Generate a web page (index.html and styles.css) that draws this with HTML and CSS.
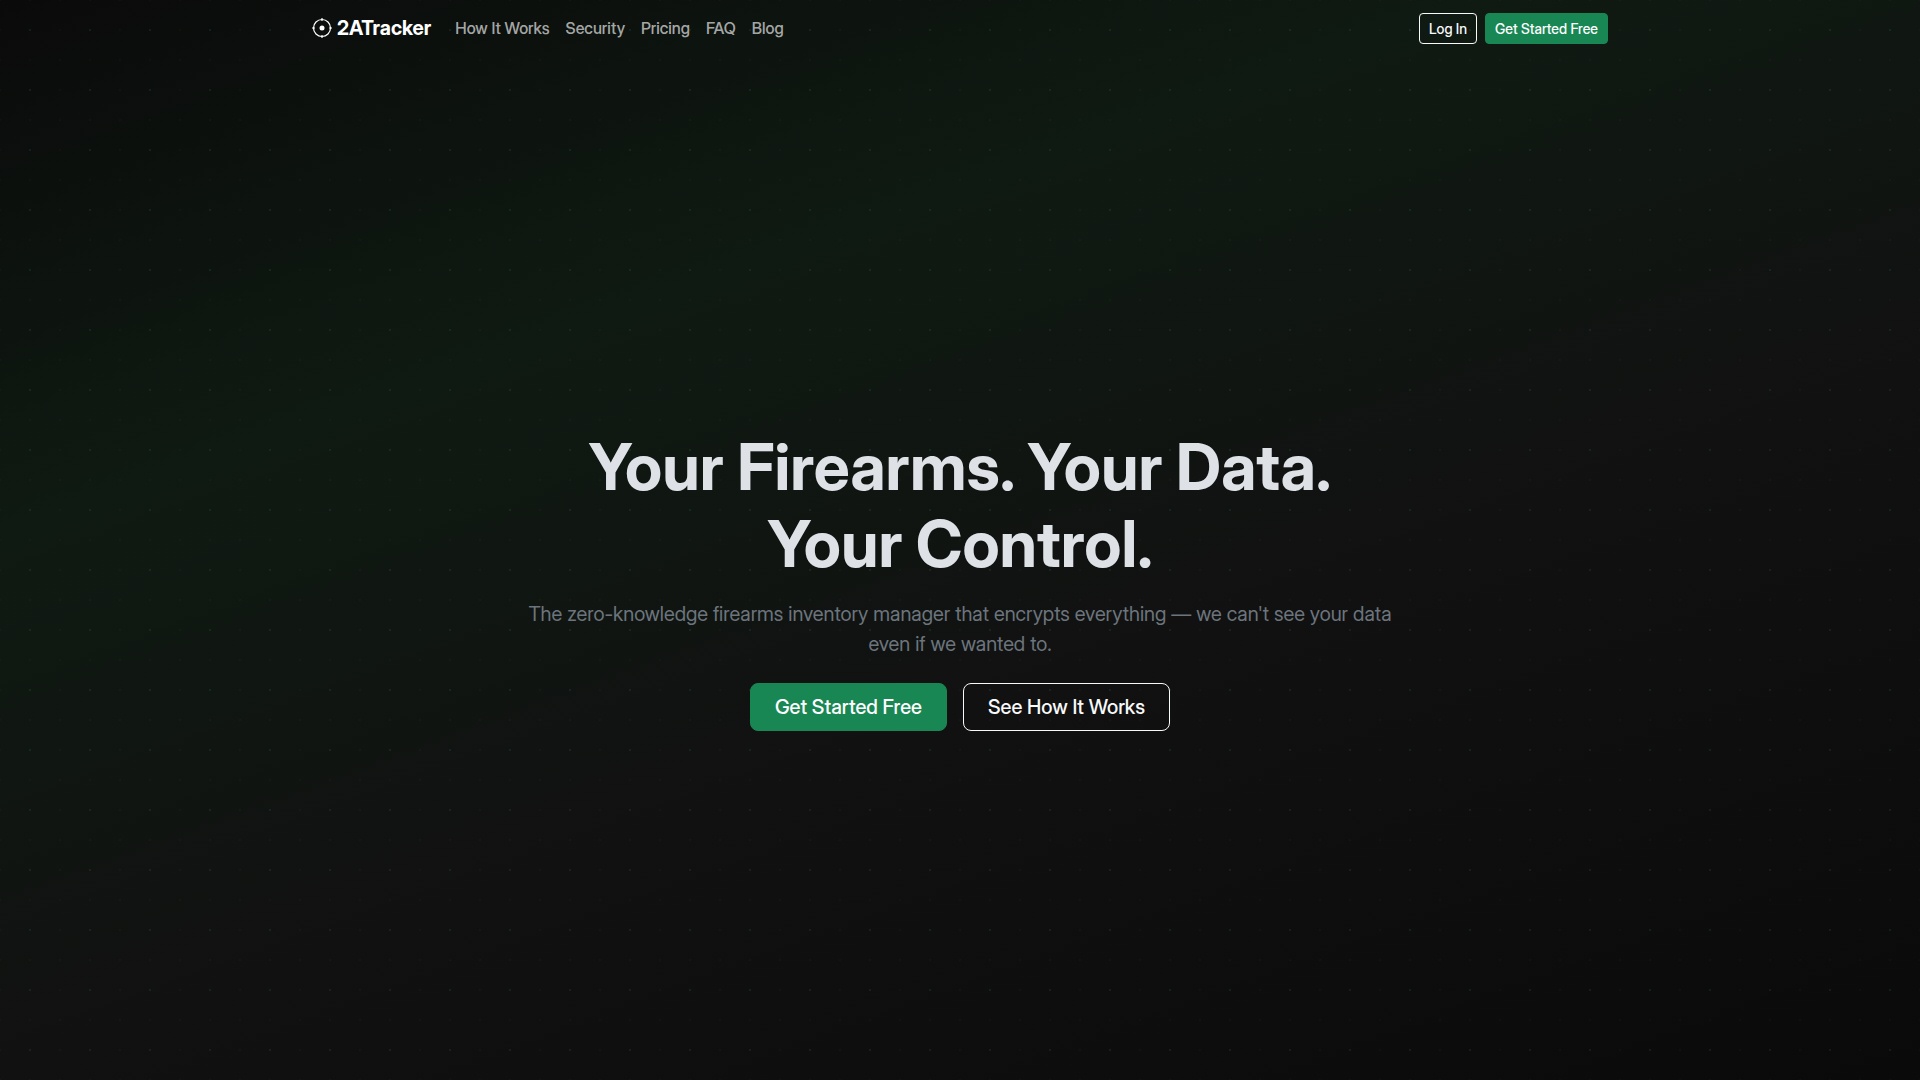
FILE: index.html
```html
<!DOCTYPE html>
<html lang="en">
<head>
  <meta charset="UTF-8">
  <meta name="viewport" content="width=device-width, initial-scale=1.0">
  <title>2ATracker</title>
  <link rel="stylesheet" href="styles.css">
</head>
<body>
  <header class="navbar">
    <div class="container">
      <a class="brand" href="#">
        <svg class="brand-icon" viewBox="0 0 20 20" fill="none" stroke="currentColor" aria-hidden="true">
          <circle cx="10" cy="10" r="8.5" stroke-width="1.2"/>
          <circle cx="10" cy="10" r="2.5" fill="currentColor" stroke="none"/>
          <path d="M10 0v3M10 17v3M0 10h3M17 10h3" stroke-width="1.2"/>
        </svg>
        2ATracker
      </a>
      <nav class="nav-links">
        <a href="#how-it-works">How It Works</a>
        <a href="#security">Security</a>
        <a href="#pricing">Pricing</a>
        <a href="#faq">FAQ</a>
        <a href="#blog">Blog</a>
      </nav>
      <div class="nav-actions">
        <a class="btn btn-sm btn-outline" href="#login">Log In</a>
        <a class="btn btn-sm btn-success" href="#signup">Get Started Free</a>
      </div>
    </div>
  </header>

  <main class="hero">
    <div class="hero-content">
      <h1>Your Firearms. Your Data.<br>Your Control.</h1>
      <p class="lead">The zero-knowledge firearms inventory manager that encrypts everything — we can't see your data even if we wanted to.</p>
      <div class="hero-actions">
        <a class="btn btn-lg btn-success" href="#signup">Get Started Free</a>
        <a class="btn btn-lg btn-outline" href="#how-it-works">See How It Works</a>
      </div>
    </div>
  </main>
</body>
</html>
```

FILE: styles.css
```css
:root {
  --success: #198754;
  --light: #f8f9fa;
  --heading: #dee2e6;
  --muted: #6c757d;
}

* {
  margin: 0;
  padding: 0;
  box-sizing: border-box;
}

body {
  display: flex;
  flex-direction: column;
  min-height: 100vh;
  font-family: "Inter Display", Inter, "Liberation Sans", sans-serif;
  font-size: 16px;
  line-height: 1.5;
  color: var(--heading);
  /* two dot grids over the diagonal gradient */
  background:
    radial-gradient(circle at 50% 50%, rgba(25, 135, 84, 0.12) 1px, transparent 1px) 0 0 / 60px 60px,
    radial-gradient(circle at 50% 50%, rgba(255, 255, 255, 0.02) 1px, transparent 1px) 15px 15px / 30px 30px,
    linear-gradient(160deg, #0a0a0a 0%, #0f1a12 30%, #111 60%, #0a0a0a 100%);
}

a {
  color: inherit;
  text-decoration: none;
}

.navbar {
  padding: 8px 0;
}

.container {
  display: flex;
  align-items: center;
  max-width: 1320px;
  min-height: 40px;
  margin: 0 auto;
  padding: 0 12px;
}

.brand {
  display: flex;
  align-items: center;
  gap: 5px;
  margin-right: 16px;
  font-size: 20px;
  font-weight: 700;
  color: #fff;
}

.brand-icon {
  width: 20px;
  height: 20px;
}

.nav-links {
  display: flex;
  font-weight: 500;
  color: rgba(255, 255, 255, 0.65);
}

.nav-links a {
  padding: 8px;
}

.nav-links a:hover {
  color: #fff;
}

.nav-actions {
  display: flex;
  gap: 8px;
  margin-left: auto;
}

.btn {
  border: 1px solid transparent;
  font-weight: 500;
  text-align: center;
}

.btn-sm {
  padding: 4px 9px;
  border-radius: 4px;
  font-size: 14px;
}

.btn-lg {
  padding: 8px 24px;
  border-radius: 8px;
  font-size: 20px;
}

.btn-success {
  background: var(--success);
  border-color: var(--success);
  color: #fff;
}

.btn-outline {
  border-color: var(--light);
  color: var(--light);
}

.hero {
  display: flex;
  flex: 1;
  align-items: center;
  justify-content: center;
  padding: 48px 12px 24px;
}

.hero-content {
  max-width: 880px;
  text-align: center;
}

.hero h1 {
  margin-bottom: 16px;
  font-size: 64px;
  font-weight: 700;
  line-height: 1.2;
}

.lead {
  margin-bottom: 24px;
  font-size: 20px;
  font-weight: 400;
  color: var(--muted);
}

.hero-actions {
  display: flex;
  flex-wrap: wrap;
  justify-content: center;
  gap: 16px;
}
```
